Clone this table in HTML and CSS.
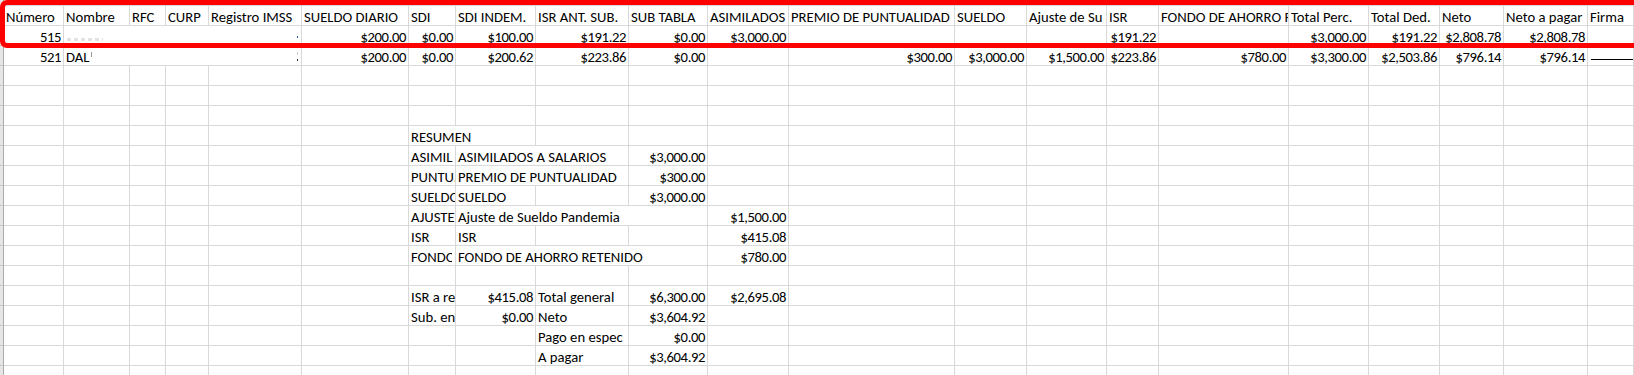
FILE: index.html
```html
<!DOCTYPE html>
<html lang="es">
<head>
<meta charset="utf-8">
<title>Nómina</title>
<link rel="stylesheet" href="styles.css">
</head>
<body>
<div class="sheet">
  <div class="row top"><div class="rh"></div><div></div><div></div><div></div><div></div><div></div><div></div><div></div><div></div><div></div><div></div><div></div><div></div><div></div><div></div><div></div><div></div><div></div><div></div><div></div><div></div><div></div></div>

  <div class="row"><div class="rh"></div><div>Número</div><div>Nombre</div><div>RFC</div><div>CURP</div><div>Registro IMSS</div><div>SUELDO DIARIO</div><div>SDI</div><div>SDI INDEM.</div><div>ISR ANT. SUB.</div><div>SUB TABLA</div><div>ASIMILADOS</div><div>PREMIO DE PUNTUALIDAD</div><div>SUELDO</div><div>Ajuste de Su</div><div>ISR</div><div>FONDO DE AHORRO <span class="partial">R</span></div><div>Total Perc.</div><div>Total Ded.</div><div>Neto</div><div>Neto a pagar</div><div>Firma</div></div>

  <div class="row"><div class="rh"></div><div class="n">515</div><div class="s4 name"><span class="smudge"></span><span class="dot"></span></div><div class="n">$200.00</div><div class="n">$0.00</div><div class="n">$100.00</div><div class="n">$191.22</div><div class="n">$0.00</div><div class="n">$3,000.00</div><div></div><div></div><div></div><div class="n">$191.22</div><div></div><div class="n">$3,000.00</div><div class="n">$191.22</div><div class="n">$2,808.78</div><div class="n">$2,808.78</div><div></div></div>

  <div class="row"><div class="rh"></div><div class="n">521</div><div class="s4 name"><span>DAL<span class="cut"></span></span><span class="stub"></span></div><div class="n">$200.00</div><div class="n">$0.00</div><div class="n">$200.62</div><div class="n">$223.86</div><div class="n">$0.00</div><div></div><div class="n">$300.00</div><div class="n">$3,000.00</div><div class="n">$1,500.00</div><div class="n">$223.86</div><div class="n">$780.00</div><div class="n">$3,300.00</div><div class="n">$2,503.86</div><div class="n">$796.14</div><div class="n">$796.14</div><div class="sign"><span class="line"></span></div></div>

  <div class="row"><div class="rh"></div><div></div><div></div><div></div><div></div><div></div><div></div><div></div><div></div><div></div><div></div><div></div><div></div><div></div><div></div><div></div><div></div><div></div><div></div><div></div><div></div><div></div></div>
  <div class="row"><div class="rh"></div><div></div><div></div><div></div><div></div><div></div><div></div><div></div><div></div><div></div><div></div><div></div><div></div><div></div><div></div><div></div><div></div><div></div><div></div><div></div><div></div><div></div></div>
  <div class="row"><div class="rh"></div><div></div><div></div><div></div><div></div><div></div><div></div><div></div><div></div><div></div><div></div><div></div><div></div><div></div><div></div><div></div><div></div><div></div><div></div><div></div><div></div><div></div></div>

  <div class="row"><div class="rh"></div><div></div><div></div><div></div><div></div><div></div><div></div><div class="s2">RESUMEN</div><div></div><div></div><div></div><div></div><div></div><div></div><div></div><div></div><div></div><div></div><div></div><div></div><div></div></div>

  <div class="row"><div class="rh"></div><div></div><div></div><div></div><div></div><div></div><div></div><div>ASIMIL</div><div class="s2">ASIMILADOS A SALARIOS</div><div class="n">$3,000.00</div><div></div><div></div><div></div><div></div><div></div><div></div><div></div><div></div><div></div><div></div><div></div></div>

  <div class="row"><div class="rh"></div><div></div><div></div><div></div><div></div><div></div><div></div><div>PUNTU.</div><div class="s2">PREMIO DE PUNTUALIDAD</div><div class="n">$300.00</div><div></div><div></div><div></div><div></div><div></div><div></div><div></div><div></div><div></div><div></div><div></div></div>

  <div class="row"><div class="rh"></div><div></div><div></div><div></div><div></div><div></div><div></div><div>SUELD<span class="partial">O</span></div><div>SUELDO</div><div></div><div class="n">$3,000.00</div><div></div><div></div><div></div><div></div><div></div><div></div><div></div><div></div><div></div><div></div><div></div></div>

  <div class="row"><div class="rh"></div><div></div><div></div><div></div><div></div><div></div><div></div><div>AJUSTE</div><div class="s3">Ajuste de Sueldo Pandemia</div><div class="n">$1,500.00</div><div></div><div></div><div></div><div></div><div></div><div></div><div></div><div></div><div></div><div></div></div>

  <div class="row"><div class="rh"></div><div></div><div></div><div></div><div></div><div></div><div></div><div>ISR</div><div>ISR</div><div></div><div></div><div class="n">$415.08</div><div></div><div></div><div></div><div></div><div></div><div></div><div></div><div></div><div></div><div></div></div>

  <div class="row"><div class="rh"></div><div></div><div></div><div></div><div></div><div></div><div></div><div>FOND<span class="partial">O</span></div><div class="s3">FONDO DE AHORRO RETENIDO</div><div class="n">$780.00</div><div></div><div></div><div></div><div></div><div></div><div></div><div></div><div></div><div></div><div></div></div>

  <div class="row"><div class="rh"></div><div></div><div></div><div></div><div></div><div></div><div></div><div></div><div></div><div></div><div></div><div></div><div></div><div></div><div></div><div></div><div></div><div></div><div></div><div></div><div></div><div></div></div>

  <div class="row"><div class="rh"></div><div></div><div></div><div></div><div></div><div></div><div></div><div>ISR a re</div><div class="n">$415.08</div><div>Total general</div><div class="n">$6,300.00</div><div class="n">$2,695.08</div><div></div><div></div><div></div><div></div><div></div><div></div><div></div><div></div><div></div><div></div></div>

  <div class="row"><div class="rh"></div><div></div><div></div><div></div><div></div><div></div><div></div><div>Sub. en</div><div class="n">$0.00</div><div>Neto</div><div class="n">$3,604.92</div><div></div><div></div><div></div><div></div><div></div><div></div><div></div><div></div><div></div><div></div><div></div></div>

  <div class="row"><div class="rh"></div><div></div><div></div><div></div><div></div><div></div><div></div><div></div><div></div><div>Pago en espec</div><div class="n">$0.00</div><div></div><div></div><div></div><div></div><div></div><div></div><div></div><div></div><div></div><div></div><div></div></div>

  <div class="row"><div class="rh"></div><div></div><div></div><div></div><div></div><div></div><div></div><div></div><div></div><div>A pagar</div><div class="n">$3,604.92</div><div></div><div></div><div></div><div></div><div></div><div></div><div></div><div></div><div></div><div></div><div></div></div>

  <div class="row"><div class="rh"></div><div></div><div></div><div></div><div></div><div></div><div></div><div></div><div></div><div></div><div></div><div></div><div></div><div></div><div></div><div></div><div></div><div></div><div></div><div></div><div></div><div></div></div>

  <div class="highlight"></div>
</div>
</body>
</html>
```
FILE: styles.css
```css
html, body {
  margin: 0;
  padding: 0;
  background: #ffffff;
  overflow: hidden;
}

.sheet {
  position: relative;
  width: 1634px;
  height: 375px;
  overflow: hidden;
  font-family: "Carlito", "Calibri", "Liberation Sans", sans-serif;
  font-size: 14.67px;
  color: #000000;
}

.row {
  display: grid;
  grid-template-columns: 4px 60px 66px 36px 43px 93px 107px 47px 80px 93px 79px 81px 166px 72px 80px 52px 130px 80px 71px 64px 84px 1fr;
  height: 20px;
}

.row > div {
  box-sizing: border-box;
  height: 20px;
  border-right: 1px solid #d9d9d9;
  border-bottom: 1px solid #d9d9d9;
  padding: 3px 2px 0 2px;
  line-height: 16px;
  white-space: nowrap;
  overflow: hidden;
}

.row.top,
.row.top > div {
  height: 6px;
}

.row.top > div {
  padding: 0;
}

.row > .rh {
  background: #e6e6e6;
  border-right: 1px solid #ababab;
  border-bottom: 1px solid #c8c8c8;
  padding: 0;
}

.row > .n {
  text-align: right;
  letter-spacing: -0.4px;
}

.row > .s2 { grid-column: span 2; }
.row > .s3 { grid-column: span 3; }
.row > .s4 { grid-column: span 4; }

.partial {
  display: inline-block;
  width: 0.45em;
  overflow: hidden;
  vertical-align: top;
}

.row > .name {
  display: flex;
  justify-content: space-between;
  align-items: flex-start;
}

.smudge {
  display: inline-block;
  width: 36px;
  height: 3px;
  margin: 9px 0 0 1px;
  background: repeating-linear-gradient(90deg, #e2e2e2 0 4px, transparent 4px 7px);
}

.dot {
  display: inline-block;
  width: 1px;
  height: 2px;
  margin-top: 7px;
  margin-right: 1px;
  background: #2a5cb8;
}

.cut {
  display: inline-block;
  width: 1px;
  height: 5px;
  margin-left: 2px;
  vertical-align: 5px;
  background: #9a9a9a;
}

.stub {
  display: inline-block;
  width: 1px;
  height: 9px;
  margin-top: 3px;
  margin-right: 1px;
  background: linear-gradient(#c8c8c8 0 3px, transparent 3px 7px, #333333 7px);
}

.row > .sign {
  padding: 0 0 0 3px;
}

.line {
  display: block;
  height: 13px;
  border-bottom: 1px solid #000000;
}

.highlight {
  position: absolute;
  left: 0;
  top: 0;
  width: 1660px;
  height: 48px;
  box-sizing: border-box;
  border: 5px solid #ff0000;
  border-radius: 7px;
  pointer-events: none;
}
```
